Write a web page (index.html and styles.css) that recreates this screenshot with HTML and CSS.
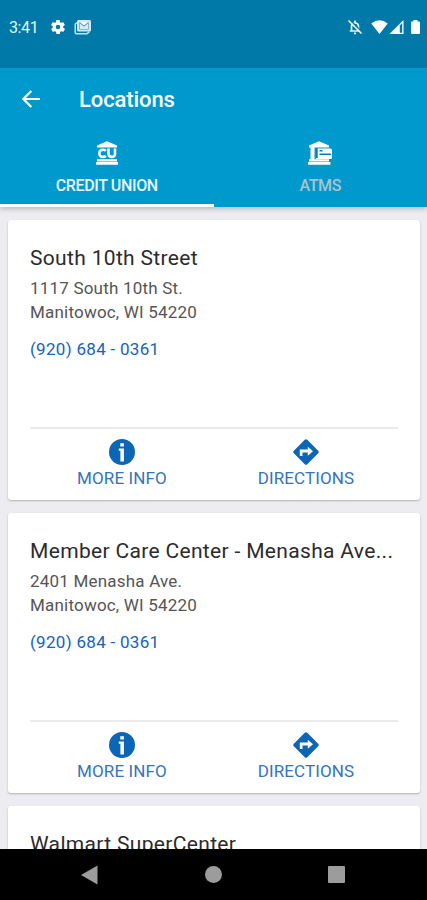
FILE: index.html
```html
<!doctype html>
<html>
<head>
<meta charset="utf-8">
<title>Locations</title>
<link rel="stylesheet" href="styles.css">
</head>

<body>
<div class="status">
	<span class="time">3:41</span>
	<svg class="gear" width="14" height="14" viewBox="2 2 20 20"><path fill="#fff" d="M19.4 13c0-.3.1-.6.1-1s0-.7-.1-1l2.1-1.6c.2-.2.2-.4.1-.6l-2-3.500c-.1-.2-.4-.3-.6-.2l-2.500 1c-.5-.4-1.100-.7-1.700-1l-.4-2.600c0-.3-.2-.5-.4-.5h-4c-.2 0-.4.200-.5.4l-.4 2.700c-.6.200-1.100.6-1.700 1l-2.500-1c-.2-.1-.5 0-.6.2l-2 3.400c-.1.200-.1.500.1.700L4.600 11c0 .3-.1.600-.1 1s0 .7.1 1l-2.100 1.600c-.2.200-.2.400-.1.600l2 3.500c.1.200.4.300.6.200l2.500-1c.5.400 1.100.7 1.700 1l.4 2.600c0 .3.200.5.500.5h4c.2 0 .4-.2.500-.4l.4-2.700c.6-.2 1.100-.6 1.700-1l2.500 1c.2.1.5 0 .6-.2l2-3.500c.1-.2.1-.5-.1-.6L19.400 13zM12 15.200a3.200 3.200 0 1 1 0-6.400 3.200 3.200 0 0 1 0 6.400z"/></svg>
	<svg class="mail" width="18" height="16" viewBox="0 0 18 16"><path fill="none" stroke="#c5e2ee" stroke-width="1.500" d="M3 3.500 1.200 5v8.500q0 1.200 1.200 1.200H13l2.500-2"/><rect x="3" y="1" width="14" height="11.500" rx="1.500" fill="#d5eaf3"/><path fill="#fff" stroke="#2a8db5" stroke-width="1" d="m5.500 3.300 4.500 3.800 4.500-3.800"/><path fill="none" stroke="#7fbad2" stroke-width="1" d="M5.500 4v6.500h9V4"/></svg>
	<span class="space"></span>
	<svg class="bell" width="16" height="16" viewBox="0 0 16 16"><path fill="none" stroke="#e4f3f9" stroke-width="1.700" d="M4.500 12V7.500Q4.500 4 8 3.800q3.500.2 3.500 3.700V12zM8 3.500V1.500M2.800 12h10.400M7 14.300h2"/><path stroke="#0079a8" stroke-width="1.500" d="m2.500.5 13 13"/><path stroke="#fff" stroke-width="1.500" d="m1.500 1.500 13 13"/></svg>
	<svg class="wifi" width="17" height="14" viewBox="0 0 17 14"><path fill="#fff" d="M.3 3.500Q8.500-3 16.700 3.500L8.500 14z"/></svg>
	<svg class="signal" width="15" height="14" viewBox="0 0 15 14"><path fill="#fff" d="M.5 14 14.500 0v14z"/><path fill="#0079a8" d="M10.800 5.500 13.200 3v9.800h-2.400z"/></svg>
	<svg class="battery" width="9" height="14" viewBox="0 0 9 14"><path fill="#fff" d="M2.500 0h4v1.500H8q1 0 1 1V13q0 1-1 1H1q-1 0-1-1V2.500q0-1 1-1h1.500z"/></svg>
</div>

<div class="header">
	<div class="bar">
		<svg width="18" height="18" viewBox="0 0 18 18"><path fill="none" stroke="#fff" stroke-width="2.200" d="M18 9H2M9.300 1 1.400 9l7.900 8"/></svg>
		<h1>Locations</h1>
	</div>
	<div class="tabs">
		<div class="tab active">
			<svg width="24" height="24" viewBox="0 0 24 24"><path fill="#fff" d="M2 6.500v-2L12 .3l10 4.200v2zM2 18.300h20v2.200H2zM1 21h22v2.700H1z"/><path fill="none" stroke="#fff" stroke-width="2.600" d="M10.800 9.800Q9.800 8.700 8 8.700 4.300 8.700 4.300 12.300T8 15.900q1.800 0 2.800-1.100M13.500 7.500v5q0 3.400 3.300 3.400T20 12.500v-5"/></svg>
			<span>CREDIT UNION</span>
		</div>
		<div class="tab">
			<svg width="26" height="24" viewBox="0 0 26 24"><path fill="#fff" d="M2 6.500v-2L12 .3l10 4.200v2zM3.500 6h4v13h-4zM2 18.300h20v2.200H2zM1 21h22.500v2.700H1zM9 7.500h14.500q1.500 0 1.500 1.500v7.500q0 1.500-1.500 1.500H9z"/><path fill="#087fb3" d="M9 7h1.700v10H9zM12.500 9h3v1.500h-3zM12.500 12.500H24V14H12.500z"/></svg>
			<span>ATMS</span>
		</div>
	</div>
</div>

<div class="list">
	<div class="card">
		<h2>South 10th Street</h2>
		<p class="address">1117 South 10th St.<br>Manitowoc, WI 54220</p>
		<p class="phone">(920) 684 - 0361</p>
		<div class="actions">
			<div class="action">
				<svg width="26" height="26" viewBox="0 0 26 26"><circle cx="13" cy="13" r="13" fill="#0d66b5"/><path fill="#fff" d="M11.300 4.300h3.600v3.300h-3.600zM9.800 9.500h5.100v13h-3.500V11.700H9.800z"/></svg>
				<span>MORE INFO</span>
			</div>
			<div class="action">
				<svg width="26" height="26" viewBox="0 0 26 26"><rect x="3.500" y="3.500" width="19" height="19" rx="1.800" fill="#0d66b5" transform="rotate(45 13 13)"/><path fill="#fff" d="M6.800 17v-6.500h8V7.800l5.200 4.500-5.200 4.500v-3.300H9.500V17z"/></svg>
				<span>DIRECTIONS</span>
			</div>
		</div>
	</div>

	<div class="card">
		<h2>Member Care Center - Menasha Ave...</h2>
		<p class="address">2401 Menasha Ave.<br>Manitowoc, WI 54220</p>
		<p class="phone">(920) 684 - 0361</p>
		<div class="actions">
			<div class="action">
				<svg width="26" height="26" viewBox="0 0 26 26"><circle cx="13" cy="13" r="13" fill="#0d66b5"/><path fill="#fff" d="M11.300 4.300h3.600v3.300h-3.600zM9.800 9.500h5.100v13h-3.500V11.700H9.800z"/></svg>
				<span>MORE INFO</span>
			</div>
			<div class="action">
				<svg width="26" height="26" viewBox="0 0 26 26"><rect x="3.500" y="3.500" width="19" height="19" rx="1.800" fill="#0d66b5" transform="rotate(45 13 13)"/><path fill="#fff" d="M6.800 17v-6.500h8V7.800l5.200 4.500-5.200 4.500v-3.300H9.500V17z"/></svg>
				<span>DIRECTIONS</span>
			</div>
		</div>
	</div>

	<div class="card">
		<h2>Walmart SuperCenter</h2>
	</div>
</div>

<div class="nav">
	<svg width="17" height="20" viewBox="0 0 17 20"><path fill="#9c9c9c" d="M0 10 16.500.5v19z"/></svg>
	<svg width="17" height="17" viewBox="0 0 17 17"><circle cx="8.500" cy="8.500" r="8.500" fill="#9c9c9c"/></svg>
	<svg width="17" height="17" viewBox="0 0 17 17"><rect width="17" height="17" rx="1" fill="#9c9c9c"/></svg>
</div>
</body>
</html>
```
FILE: styles.css
```css
*{ margin:0; padding:0; box-sizing:border-box;}
body{ width:427px; height:900px; overflow:hidden; display:flex; flex-direction:column; font-family:Roboto,"Liberation Sans",sans-serif; background:#ededf1;}
svg{ display:block; flex:none;}

/* status bar */
.status{ flex:none; height:68px; padding:0 7px 14px 9px; display:flex; align-items:center; color:#e4f3f9; background:#0079a8;}
.time{ width:42px; font-size:16px; line-height:20px; padding-top:2px; letter-spacing:-.4px;}
.mail{ margin-left:9px;}
.space{ flex:1;}
.wifi{ margin-left:8px;}
.signal{ margin-left:1px;}
.battery{ margin-left:7px;}

/* title and tabs */
.header{ flex:none; height:139px; position:relative; background:#0099ce; color:#fff; box-shadow:0 2px 5px rgba(0,0,0,.22);}
.bar{ height:62px; padding-left:22px; display:flex; align-items:center;}
.bar h1{ margin:2px 0 0 39px; font-size:22px; line-height:26px; font-weight:500; letter-spacing:-.1px;}
.tabs{ display:flex; height:77px;}
.tab{ flex:1; padding-top:11px; display:flex; flex-direction:column; align-items:center; font-size:16px; line-height:20px; font-weight:500; letter-spacing:-.35px; color:#a9c4d0;}
.tab span{ margin-top:11px;}
.active{ color:#e8f6fc; border-bottom:3px solid #fff;}

/* location cards */
.list{ flex:1; min-height:0; overflow:hidden; padding:13px 7px 0 8px;}
.card{ height:280px; margin-bottom:13px; padding:25px 22px 0; display:flex; flex-direction:column; background:#fff; border-radius:3px; box-shadow:0 1px 2px rgba(0,0,0,.25);}
.card h2{ flex:none; font-size:21px; line-height:26px; font-weight:400; color:#2b2b2b; letter-spacing:.33px; white-space:nowrap;}
.address{ margin-top:6px; font-size:17px; line-height:23.500px; color:#555; letter-spacing:.2px;}
.phone{ margin-top:14px; font-size:17px; line-height:23px; color:#1763b5; letter-spacing:.3px;}
.actions{ margin-top:auto; height:73px; border-top:2px solid #ebebec; display:flex;}
.action{ width:184px; padding-top:10px; display:flex; flex-direction:column; align-items:center; font-size:17px; line-height:22px; color:#3474ba; letter-spacing:.12px;}
.action span{ margin-top:2px;}

/* navigation buttons */
.nav{ flex:none; height:51px; padding:0 82px 0 81px; display:flex; align-items:center; justify-content:space-between; background:#000;}
```
